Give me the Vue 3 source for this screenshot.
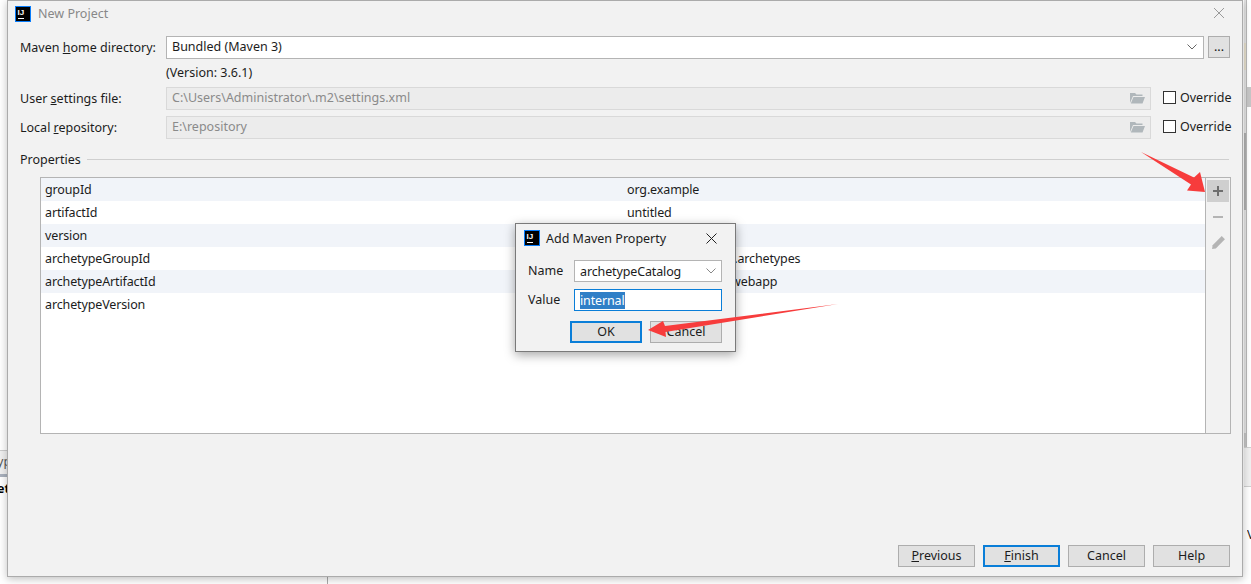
<script setup>
const rows = [
  { k: 'groupId', v: 'org.example' },
  { k: 'artifactId', v: 'untitled' },
  { k: 'version', v: '1.0-SNAPSHOT' },
  { k: 'archetypeGroupId', v: 'org.apache.maven.archetypes' },
  { k: 'archetypeArtifactId', v: 'maven-archetype-webapp' },
  { k: 'archetypeVersion', v: 'RELEASE' }
]
</script>

<template>
  <div class="desk">
    <div class="behind">
      <div class="peek-tab"><span>yp</span></div>
      <div class="peek-bold"><span>et</span></div>
      <div class="peek-line"></div>
      <div class="peek-marks"><i></i><i></i></div>
      <div class="peek-right">V</div>
      <div class="strip"></div>
      <div class="strip-line"></div>
      <div class="strip-tan"></div>
      <div class="strip-dark"></div>
      <div class="strip-dark low"></div>
      <div class="strip-thumb"></div>
      <div class="strip-band"></div>
    </div>

    <main class="dialog">
      <header class="title">
        <svg class="logo" viewBox="0 0 16 16" width="16" height="16">
          <rect x="0.5" y="0.5" width="15" height="15" fill="#000" stroke="#087cfa" />
          <text x="2.500" y="9" font-size="8" font-weight="700" fill="#fff" font-family="Liberation Sans, sans-serif">IJ</text>
          <rect x="3" y="12" width="6" height="1" fill="#fff" />
        </svg>
        <span class="title-text">New Project</span>
        <svg class="close" viewBox="0 0 12 12" width="12" height="12">
          <path d="M1 1l10 10M11 1L1 11" stroke="#9a9a9a" stroke-width="1" fill="none" />
        </svg>
      </header>

      <section class="form">
        <div class="row">
          <label class="lbl">Maven <u>h</u>ome directory:</label>
          <div class="field combo">
            <span>Bundled (Maven 3)</span>
            <svg viewBox="0 0 10 6" width="10" height="6"><path d="M0.500 0.500l4.500 4.500 4.500-4.500" stroke="#666" fill="none" /></svg>
          </div>
          <button class="dots">...</button>
        </div>
        <div class="version">(Version: 3.6.1)</div>
        <div class="row r-user">
          <label class="lbl">User <u>s</u>ettings file:</label>
          <div class="field off">
            <span>C:\Users\Administrator\.m2\settings.xml</span>
            <svg class="folder" viewBox="0 0 15 12" width="15" height="12"><path d="M0 1h5l1.500 1.500h6V4H3L0 11z M3.500 5H15l-2.500 6.500H0.800z" fill="#b0b7bb" /></svg>
          </div>
          <label class="chk"><i></i>Override</label>
        </div>
        <div class="row r-local">
          <label class="lbl">Local <u>r</u>epository:</label>
          <div class="field off">
            <span>E:\repository</span>
            <svg class="folder" viewBox="0 0 15 12" width="15" height="12"><path d="M0 1h5l1.500 1.500h6V4H3L0 11z M3.500 5H15l-2.500 6.500H0.800z" fill="#b0b7bb" /></svg>
          </div>
          <label class="chk"><i></i>Override</label>
        </div>
        <div class="sep"><span>Properties</span><b></b></div>

        <div class="table">
          <div class="rows">
            <div v-for="r in rows" :key="r.k" class="tr">
              <span class="k">{{ r.k }}</span><span class="v">{{ r.v }}</span>
            </div>
          </div>
          <aside class="tools">
            <div class="tool on">
              <svg viewBox="0 0 12 12" width="12" height="12"><path d="M5 1h2v4h4v2H7v4H5V7H1V5h4z" fill="#6e6e6e" /></svg>
            </div>
            <div class="tool">
              <svg viewBox="0 0 12 12" width="12" height="12"><rect x="1" y="5" width="10" height="2" fill="#b4b4b4" /></svg>
            </div>
            <div class="tool">
              <svg viewBox="0 0 14 14" width="15" height="15"><path d="M10 1l3 3-8.500 8.500L1 13l0.500-3.500z" fill="#b4b4b4" /></svg>
            </div>
          </aside>
        </div>
      </section>

      <footer class="foot">
        <button class="btn"><u>P</u>revious</button>
        <button class="btn primary"><u>F</u>inish</button>
        <button class="btn">Cancel</button>
        <button class="btn">Help</button>
      </footer>
    </main>

    <div class="mini">
      <header class="mini-title">
        <svg viewBox="0 0 16 16" width="16" height="16">
          <rect x="0.5" y="0.5" width="15" height="15" fill="#000" stroke="#087cfa" />
          <text x="2.500" y="9" font-size="8" font-weight="700" fill="#fff" font-family="Liberation Sans, sans-serif">IJ</text>
          <rect x="3" y="12" width="6" height="1" fill="#fff" />
        </svg>
        <span>Add Maven Property</span>
        <svg class="mini-x" viewBox="0 0 11 11" width="11" height="11"><path d="M0.500 0.500l10 10M10.500 0.500l-10 10" stroke="#222" fill="none" /></svg>
      </header>
      <div class="mini-row">
        <label>Name</label>
        <div class="mini-field">archetypeCatalog
          <svg viewBox="0 0 10 6" width="10" height="6"><path d="M0.500 0.500l4.500 4.500 4.500-4.500" stroke="#888" fill="none" /></svg>
        </div>
      </div>
      <div class="mini-row second">
        <label>Value</label>
        <div class="mini-field focus"><span class="sel">internal</span></div>
      </div>
      <div class="mini-btns">
        <button class="btn mb primary">OK</button>
        <button class="btn mb">Cancel</button>
      </div>
    </div>

    <svg class="arrows" viewBox="0 0 1251 584" width="1251" height="584">
      <path d="M1141 152L1194 177.500L1200 172L1205 192L1187 190.500L1191 184.500Z" fill="#f73c3c" />
      <path d="M838 304L665 326L663 321L648 330L666 337L665.500 332Z" fill="#f73c3c" />
    </svg>
  </div>
</template>

<style>
html, body { margin: 0; background: #fff; }
</style>

<style scoped>
.desk {
  position: relative;
  width: 1251px;
  height: 584px;
  overflow: hidden;
  background: #fff;
  font-family: "Noto Sans", "Open Sans", sans-serif;
  font-size: 12.5px;
  color: #1c1c1c;
}
.behind > * { position: absolute; }
.peek-tab { left: 0; top: 450px; width: 8px; height: 27px; background: #f0f0f0; border-top: 1px solid #ccc; border-bottom: 3px solid #a9b1bd; box-sizing: border-box; overflow: hidden; line-height: 22px; color: #555; }
.peek-tab span { display: block; margin-left: -3px; white-space: nowrap; }
.peek-bold { left: 0; top: 480px; font-weight: 700; width: 8px; overflow: hidden; line-height: 18px; color: #000; }
.peek-bold span { display: block; margin-left: -3px; }
.peek-line { left: 327px; top: 577px; width: 1px; height: 7px; background: #aaa; }
.peek-marks i { position: absolute; top: 575px; width: 5px; height: 2px; background: #333; }
.peek-marks i:first-child { left: 347px; }
.peek-marks i:last-child { left: 401px; }
.peek-right { left: 1247px; top: 526px; color: #222; width: 4px; overflow: hidden; }
.strip { left: 1244px; top: 0; width: 3px; height: 447px; background: #e3e3e3; }
.strip-line { left: 1246px; top: 0; width: 1px; height: 447px; background: #b9b9b9; }
.strip-tan { left: 1244px; top: 43px; width: 2px; height: 27px; background: #e6dfcc; }
.strip-dark { left: 1244px; top: 133px; width: 2px; height: 77px; background: #b0b0b0; }
.strip-dark.low { top: 433px; height: 14px; background: #c4c4c4; }
.strip-thumb { left: 1247px; top: 87px; width: 4px; height: 20px; background: #c6c6c6; }
.strip-band { left: 1244px; top: 447px; width: 7px; height: 38px; background: #f0f0f0; border-top: 1px solid #d0d0d0; border-bottom: 1px solid #cfcfcf; }

.dialog {
  position: absolute;
  left: 7px;
  top: 0;
  width: 1236px;
  height: 577px;
  box-sizing: border-box;
  display: flex;
  flex-direction: column;
  background: #f2f2f2;
  border: 1px solid #ababab;
  box-shadow: 0 2px 8px rgba(0, 0, 0, 0.25);
}
.title { height: 27px; padding: 5px 0 0 7px; display: flex; align-items: flex-start; box-sizing: border-box; flex: none; }
.logo { flex: none; }
.title-text { margin-left: 7px; color: #888; line-height: 16px; }
.close { margin-left: auto; margin-right: 17px; margin-top: 1px; }

.form { padding: 8px 12px 0 12px; flex: 1; }
.row { display: flex; align-items: center; height: 23px; }
.lbl { width: 146px; flex: none; white-space: nowrap; padding-bottom: 1px; }
.field {
  flex: 1;
  height: 23px;
  box-sizing: border-box;
  border: 1px solid #b4b4b4;
  background: #fff;
  padding: 0 6px 2px 5px;
  display: flex;
  align-items: center;
  justify-content: space-between;
  line-height: 18px;
}
.dots { width: 22px; height: 22px; margin-left: 4px; padding: 0; border: 1px solid #adadad; background: #e1e1e1; font: inherit; line-height: 18px; color: #111; align-self: flex-start; }
.version { margin: 4px 0 0 146px; height: 20px; line-height: 20px; }
.r-user { margin-top: 4px; }
.r-local { margin-top: 6px; }
.off { background: #ececec; border-color: #d9d9d9; color: #8a8a8a; }
.folder { margin-right: -1px; }
.chk { width: 67px; margin-left: 12px; flex: none; display: flex; align-items: center; white-space: nowrap; padding-bottom: 2px; }
.chk i { width: 11px; height: 11px; border: 1px solid #333; background: #fff; margin-right: 4px; flex: none; }
.sep { display: flex; align-items: center; margin-top: 10px; height: 20px; }
.sep b { flex: 1; height: 1px; background: #cfcfcf; margin-left: 6px; margin-right: 1px; }
.table {
  margin: 8px 0 0 20px;
  width: 1191px;
  height: 257px;
  box-sizing: border-box;
  border: 1px solid #b4b4b4;
  background: #fff;
  display: flex;
}
.rows { flex: 1; letter-spacing: -0.13px; }
.tr { height: 23px; line-height: 23px; display: flex; padding-left: 4px; }
.tr:nth-child(odd) { background: #f1f4f9; }
.k { width: 582px; flex: none; }
.tools { width: 25px; flex: none; border-left: 1px solid #b4b4b4; background: #f2f2f2; padding: 2px 1px; box-sizing: border-box; }
.tool { width: 22px; height: 22px; margin-bottom: 3px; display: flex; align-items: center; justify-content: center; }
.tool.on { background: #cfcfcf; margin-bottom: 4px; }
.foot { height: 31px; box-sizing: border-box; padding: 0 12px 9px 0; display: flex; justify-content: flex-end; gap: 8px; flex: none; }
.btn { width: 77px; height: 22px; box-sizing: border-box; padding: 0; border: 1px solid #adadad; background: #e1e1e1; font: inherit; color: #1c1c1c; line-height: 18px; }
.btn.primary { border: 2px solid #0a7ed8; }

.mini {
  position: absolute;
  left: 515px;
  top: 223px;
  width: 221px;
  height: 129px;
  box-sizing: border-box;
  background: #f2f2f2;
  border: 1px solid #7a7a7a;
  box-shadow: 0 3px 10px rgba(0, 0, 0, 0.35);
  padding: 5px 13px 0 12px;
}
.mini-title { display: flex; align-items: center; height: 18px; margin-left: -4px; margin-right: -1px; }
.mini-title span { margin-left: 6px; }
.mini-x { margin-left: auto; margin-right: 6px; }
.mini-row { display: flex; align-items: center; margin-top: 13px; height: 22px; }
.mini-row.second { margin-top: 7px; }
.mini-row label { width: 46px; flex: none; padding-bottom: 1px; }
.mini-field { flex: 1; height: 22px; box-sizing: border-box; border: 1px solid #b4b4b4; background: #fff; padding: 0 5px; display: flex; align-items: center; justify-content: space-between; line-height: 17px; letter-spacing: -0.13px; }
.mini-field.focus { border-color: #0a7ed8; justify-content: flex-start; }
.sel { background: #2f7fc7; color: #fff; line-height: 17px; }
.mini-btns { display: flex; justify-content: flex-end; gap: 8px; margin-top: 10px; }
.btn.mb { width: 72px; }
.arrows { position: absolute; left: 0; top: 0; pointer-events: none; }
</style>
